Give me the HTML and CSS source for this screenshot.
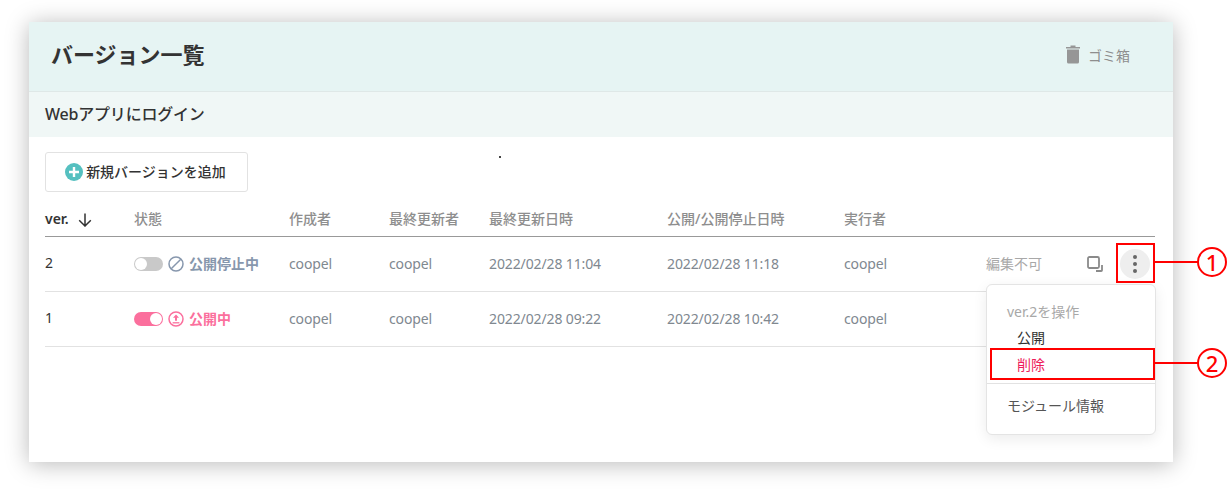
FILE: index.html
```html
<!DOCTYPE html>
<html lang="ja">
<head>
<meta charset="utf-8">
<title>バージョン一覧</title>
<link rel="stylesheet" href="styles.css">
</head>
<body>
<main class="card">
  <header class="head">
    <h1 class="title">バージョン一覧</h1>
    <div class="trash">
      <svg class="trash-icon" viewBox="0 0 14 19" width="14" height="19"><path d="M0 2h14v1.6H0zM4.5.5h5V2h-5zM1 4.6h12V17a1.6 1.6 0 0 1-1.6 1.6H2.600A1.600 1.600 0 0 1 1 17z" fill="#969696"/></svg>
      <span>ゴミ箱</span>
    </div>
  </header>
  <div class="sub">Webアプリにログイン</div>
  <section class="body">
    <button class="add"><svg viewBox="0 0 18 18" width="18" height="18"><circle cx="9" cy="9" r="9" fill="#55c0c0"/><path d="M9 4v10M4 9h10" stroke="#fff" stroke-width="2.400"/></svg><span>新規バージョンを追加</span></button>
    <div class="table">
      <div class="row th">
        <div class="ver">ver.<svg class="arrow" viewBox="0 0 14 14" width="14" height="14"><path d="M7 .5v12.500M1.200 7.300 7 13l5.800-5.700" fill="none" stroke="#333" stroke-width="1.500"/></svg></div>
        <div>状態</div><div>作成者</div><div>最終更新者</div><div>最終更新日時</div><div>公開/公開停止日時</div><div>実行者</div><div></div>
      </div>
      <div class="row td">
        <div class="num">2</div>
        <div class="status off">
          <span class="toggle"><i></i></span>
          <svg viewBox="0 0 16 16" width="16" height="16"><circle cx="8" cy="8" r="7" fill="none" stroke="#8797ad" stroke-width="1.500"/><path d="M3.200 12.800 12.800 3.200" stroke="#8797ad" stroke-width="1.500"/></svg>
          <b>公開停止中</b>
        </div>
        <div>coopel</div><div>coopel</div><div>2022/02/28 11:04</div><div>2022/02/28 11:18</div><div>coopel</div>
        <div class="actions">
          <span class="locked">編集不可</span>
          <svg class="copy" viewBox="0 0 16 16" width="16" height="16"><rect x="1" y="1" width="11" height="11" rx="1.500" fill="none" stroke="#8a8a8a" stroke-width="1.800"/><path d="M15 9v5.200a.8.800 0 0 1-.8.800H9" fill="none" stroke="#8a8a8a" stroke-width="1.800"/></svg>
          <span class="kebab"><i></i><i></i><i></i></span>
        </div>
      </div>
      <div class="row td">
        <div class="num">1</div>
        <div class="status on">
          <span class="toggle"><i></i></span>
          <svg viewBox="0 0 16 16" width="16" height="16"><circle cx="8" cy="8" r="7" fill="none" stroke="#fb6f9d" stroke-width="1.500"/><path d="M8 3.600 11 6.800H9v3H7v-3H5z" fill="#fb6f9d"/><path d="M4.600 11.800h6.800" stroke="#fb6f9d" stroke-width="1.300"/></svg>
          <b>公開中</b>
        </div>
        <div>coopel</div><div>coopel</div><div>2022/02/28 09:22</div><div>2022/02/28 10:42</div><div>coopel</div><div></div>
      </div>
    </div>
  </section>
</main>
<span class="speck"></span>
<nav class="menu">
  <div class="menu-label">ver.2を操作</div>
  <div class="menu-item">公開</div>
  <div class="menu-item danger">削除</div>
  <div class="menu-rule"></div>
  <div class="menu-plain">モジュール情報</div>
</nav>
<span class="mark mark-one"></span>
<span class="mark mark-two"></span>
<span class="lead lead-one"></span>
<span class="lead lead-two"></span>
<span class="badge badge-one">1</span>
<span class="badge badge-two">2</span>
</body>
</html>
```
FILE: styles.css
```css
* { box-sizing: border-box; }
html, body { margin: 0; height: 492px; overflow: hidden; background: #fff; }
body {
  position: relative;
  padding: 22px 57px 30px 29px;
  font-family: "Noto Sans", "Noto Sans CJK JP", sans-serif;
  color: #333;
}
.card {
  height: 440px;
  background: #fff;
  box-shadow: 0 2px 22px rgba(0, 0, 0, .28);
}
.head {
  height: 70px;
  padding: 0 43px 2px 22px;
  display: flex;
  align-items: center;
  justify-content: space-between;
  background: #e6f4f3;
  border-bottom: 1px solid #dfe8e7;
}
.title { margin: 0 0 4px; font-size: 22px; line-height: 28px; font-weight: 700; color: #333; }
.trash { display: flex; align-items: center; gap: 8px; font-size: 14px; line-height: 20px; color: #8e8e8e; }
.trash-icon { margin-top: -3px; }
.sub {
  height: 45px;
  padding: 0 16px 2px;
  display: flex;
  align-items: center;
  background: #f0f7f6;
  font-size: 16px;
  line-height: 22px;
  letter-spacing: -.2px;
  font-weight: 500;
  color: #333;
}
.body { padding: 15px 18px 0 16px; }
.add {
  width: 203px;
  height: 40px;
  padding: 0 2px 0 0;
  display: flex;
  align-items: center;
  justify-content: center;
  gap: 3px;
  background: #fff;
  border: 1px solid #e2e2e2;
  border-radius: 3px;
  font: 500 14px/20px "Noto Sans", "Noto Sans CJK JP", sans-serif;
  color: #333;
}
.table { margin-top: 10px; }
.row {
  display: grid;
  grid-template-columns: 89px 155px 100px 100px 178px 177px 130px 1fr;
  align-items: center;
}
.th {
  height: 35px;
  border-bottom: 1px solid #999;
  font-size: 14px;
  line-height: 20px;
  font-weight: 500;
  color: #8e8e8e;
}
.ver { display: flex; align-items: center; gap: 9px; color: #333; font-weight: 600; }
.arrow { margin-top: 1px; }
.td {
  height: 55px;
  border-bottom: 1px solid #e2e2e2;
  font-size: 14px;
  line-height: 20px;
  letter-spacing: -.12px;
  color: #808890;
}
.num { color: #333; font-size: 14px; margin-top: -2px; }
.status { display: flex; align-items: center; gap: 5px; letter-spacing: 0; }
.status b { font-size: 14px; font-weight: 700; }
.off b { color: #8797ad; }
.on b { color: #fb6f9d; }
.toggle {
  width: 29px;
  height: 14px;
  padding: 1px;
  display: flex;
  border-radius: 7px;
  background: #c9c9c9;
}
.toggle i { width: 12px; height: 12px; border-radius: 50%; background: #fff; }
.on .toggle { background: #fb6f9d; justify-content: flex-end; }
.actions {
  display: flex;
  align-items: center;
  justify-content: flex-end;
  margin-left: -90px;
  font-size: 14px;
  letter-spacing: 0;
}
.locked { color: #a8a8a8; margin-right: 45px; }
.copy { margin-right: 17px; margin-top: -1px; }
.kebab {
  width: 30px;
  height: 30px;
  display: flex;
  flex-direction: column;
  align-items: center;
  justify-content: center;
  gap: 3px;
  border-radius: 50%;
  background: #eee;
  margin-right: 5px;
}
.kebab i { width: 4px; height: 4px; border-radius: 50%; background: #666; }
.speck { position: absolute; left: 499px; top: 156px; width: 2px; height: 2px; background: #444; }
.menu {
  position: absolute;
  left: 986px;
  top: 284px;
  width: 170px;
  height: 151px;
  padding-top: 17px;
  background: #fff;
  border: 1px solid #e4e4e4;
  border-radius: 6px;
  box-shadow: 0 4px 14px rgba(0, 0, 0, .08);
  font-size: 14px;
  line-height: 20px;
}
.menu-label { height: 20px; margin-bottom: 2px; padding-left: 20px; color: #a8a8a8; }
.menu-item { height: 27px; padding-left: 30px; line-height: 28px; color: #333; }
.danger { color: #ee1c5c; }
.menu-rule { height: 1px; margin-top: 5px; background: #e2e2e2; }
.menu-plain { padding: 12px 0 0 20px; color: #555; }
.mark { position: absolute; border: 2px solid #f00; }
.mark-one { left: 1116px; top: 243px; width: 39px; height: 40px; }
.mark-two { left: 990px; top: 348px; width: 165px; height: 32px; }
.lead { position: absolute; left: 1155px; width: 43px; height: 2px; background: #f00; }
.lead-one { top: 261px; }
.lead-two { top: 362px; }
.badge {
  position: absolute;
  left: 1197px;
  width: 30px;
  height: 30px;
  display: flex;
  align-items: center;
  justify-content: center;
  border: 2px solid #f00;
  border-radius: 50%;
  background: #fff;
  font: 500 22px/26px "Noto Sans", sans-serif;
  color: #f00;
}
.badge-one { top: 247px; }
.badge-two { top: 348px; }
```
